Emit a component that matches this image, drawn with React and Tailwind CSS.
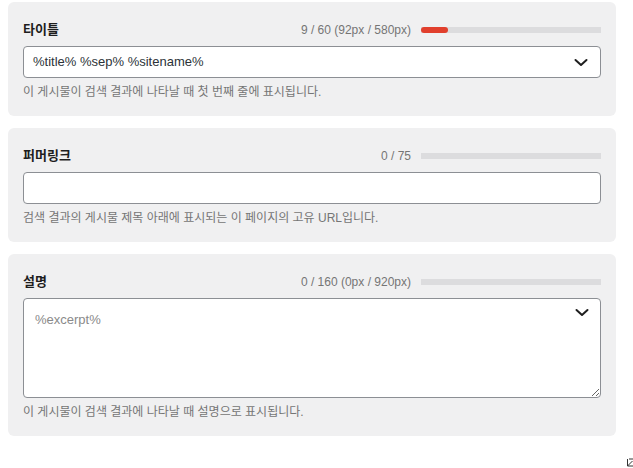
import React from 'react';

const font = { fontFamily: '"Liberation Sans", "Noto Sans CJK KR", sans-serif' };

function Chevron() {
    return (
        <svg className="h-[9px] w-[14px] text-[#1e1e1e]" viewBox="0 0 14 9" fill="none" stroke="currentColor">
            <path d="M1.5 2l5.5 5 5.5-5" strokeWidth={2} strokeLinecap="round" strokeLinejoin="round" />
        </svg>
    );
}

function Counter({ text, fill }) {
    return (
        <div className="flex items-center gap-[10px]">
            <span className="text-[12px] leading-4 text-[#757575]">{text}</span>
            <div className="h-[6px] w-[180px] bg-[#dcdcde]">
                {fill > 0 && <div className="h-full rounded-full bg-[#e13f2d]" style={{ width: fill }} />}
            </div>
        </div>
    );
}

function Panel({ label, counter, fill, help, children }) {
    return (
        <div className="rounded-md bg-[#f0f0f1] px-[15px] pt-5 pb-4">
            <div className="mb-2 flex h-4 items-center justify-between">
                <span className="text-[13px] font-bold leading-4 text-[#1e1e1e]">{label}</span>
                <Counter text={counter} fill={fill} />
            </div>
            {children}
            <p className="mt-[6px] text-[12px] leading-4 text-[#757575]">{help}</p>
        </div>
    );
}

export default function App() {
    return (
        <div className="relative h-[468px] w-[633px] bg-white" style={font}>
            <div className="flex w-[616px] flex-col gap-3 pl-2 pt-[2px]">
                <Panel
                    label="타이틀"
                    counter="9 / 60 (92px / 580px)"
                    fill={27}
                    help="이 게시물이 검색 결과에 나타날 때 첫 번째 줄에 표시됩니다."
                >
                    <div className="flex h-8 items-center justify-between rounded border border-[#8c8f94] bg-white pl-[9px] pr-3">
                        <span className="text-[13px] text-[#2c3338]">%title% %sep% %sitename%</span>
                        <Chevron />
                    </div>
                </Panel>

                <Panel
                    label="퍼머링크"
                    counter="0 / 75"
                    fill={0}
                    help="검색 결과의 게시물 제목 아래에 표시되는 이 페이지의 고유 URL입니다."
                >
                    <div className="h-8 rounded border border-[#8c8f94] bg-white" />
                </Panel>

                <Panel
                    label="설명"
                    counter="0 / 160 (0px / 920px)"
                    fill={0}
                    help="이 게시물이 검색 결과에 나타날 때 설명으로 표시됩니다."
                >
                    <div className="relative">
                        <textarea
                            className="block h-[100px] w-full resize-y rounded border border-[#8c8f94] bg-white px-[11px] py-[11px] text-[13px] text-[#2c3338] outline-none placeholder:text-[#8a8a8a]"
                            placeholder="%excerpt%"
                        />
                        <div className="absolute right-3 top-[10px]">
                            <Chevron />
                        </div>
                    </div>
                </Panel>
            </div>

            <svg className="absolute bottom-[1px] right-0 h-[9px] w-[6px]" viewBox="0 0 6 9" fill="none" stroke="#333">
                <path d="M0.5 1v7h5.5M0.5 8l5-5M2 1h4" strokeWidth={1} />
            </svg>
        </div>
    );
}
